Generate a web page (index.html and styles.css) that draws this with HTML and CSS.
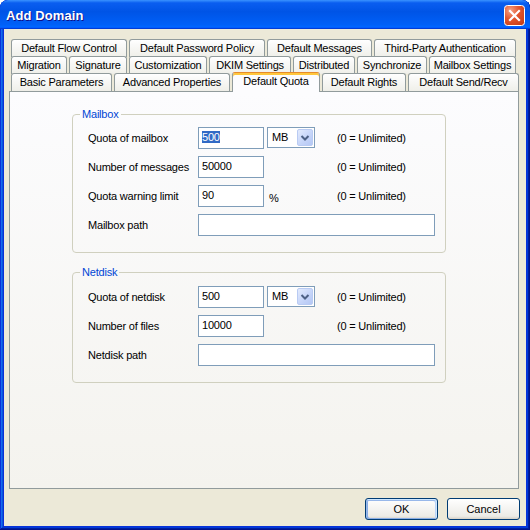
FILE: index.html
```html
<!DOCTYPE html>
<html lang="en">
<head>
<meta charset="utf-8">
<title>Add Domain</title>
<link rel="stylesheet" href="styles.css">
</head>
<body>
<div class="window">
  <div class="titlebar">
    <span class="title">Add Domain</span>
    <button class="close" aria-label="Close">
      <svg width="21" height="21" viewBox="0 0 21 21">
        <defs>
          <radialGradient id="cg" cx="0.3" cy="0.25" r="0.95">
            <stop offset="0" stop-color="#f6a285"/>
            <stop offset="0.45" stop-color="#e2562f"/>
            <stop offset="1" stop-color="#c43a14"/>
          </radialGradient>
        </defs>
        <rect x="0.5" y="0.5" width="20" height="20" rx="3" fill="url(#cg)" stroke="#fff"/>
        <path d="M6 6 L15 15 M15 6 L6 15" stroke="#fff" stroke-width="2.2" stroke-linecap="square" fill="none"/>
      </svg>
    </button>
  </div>
  <div class="client">
    <div class="tabs">
      <div class="tabrow r1">
        <div class="tab">Default Flow Control</div>
        <div class="tab">Default Password Policy</div>
        <div class="tab">Default Messages</div>
        <div class="tab">Third-Party Authentication</div>
      </div>
      <div class="tabrow r2">
        <div class="tab">Migration</div>
        <div class="tab">Signature</div>
        <div class="tab">Customization</div>
        <div class="tab">DKIM Settings</div>
        <div class="tab">Distributed</div>
        <div class="tab">Synchronize</div>
        <div class="tab">Mailbox Settings</div>
      </div>
      <div class="tabrow r3">
        <div class="tab">Basic Parameters</div>
        <div class="tab">Advanced Properties</div>
        <div class="tab sel">Default Quota</div>
        <div class="tab">Default Rights</div>
        <div class="tab">Default Send/Recv</div>
      </div>
    </div>
    <div class="panel">
      <fieldset class="group">
        <legend>Mailbox</legend>
        <div class="rows">
          <div class="row">
            <span class="label">Quota of mailbox</span>
            <div class="field"><span class="hl">500</span></div>
            <div class="combo"><span class="combo-text">MB</span><span class="combo-btn"><svg width="14" height="15" viewBox="0 0 14 15"><path d="M3.5 6 L7 9.5 L10.5 6" stroke="#4d6185" stroke-width="2" fill="none"/></svg></span></div>
            <span class="note">(0 = Unlimited)</span>
          </div>
          <div class="row">
            <span class="label">Number of messages</span>
            <div class="field">50000</div>
            <span></span>
            <span class="note">(0 = Unlimited)</span>
          </div>
          <div class="row">
            <span class="label">Quota warning limit</span>
            <div class="field">90</div>
            <span class="unit">%</span>
            <span class="note">(0 = Unlimited)</span>
          </div>
          <div class="row">
            <span class="label">Mailbox path</span>
            <div class="field wide"></div>
          </div>
        </div>
      </fieldset>
      <fieldset class="group g-net">
        <legend>Netdisk</legend>
        <div class="rows">
          <div class="row">
            <span class="label">Quota of netdisk</span>
            <div class="field">500</div>
            <div class="combo"><span class="combo-text">MB</span><span class="combo-btn"><svg width="14" height="15" viewBox="0 0 14 15"><path d="M3.5 6 L7 9.5 L10.5 6" stroke="#4d6185" stroke-width="2" fill="none"/></svg></span></div>
            <span class="note">(0 = Unlimited)</span>
          </div>
          <div class="row">
            <span class="label">Number of files</span>
            <div class="field">10000</div>
            <span></span>
            <span class="note">(0 = Unlimited)</span>
          </div>
          <div class="row">
            <span class="label">Netdisk path</span>
            <div class="field wide"></div>
          </div>
        </div>
      </fieldset>
    </div>
    <div class="buttons">
      <button class="btn def">OK</button>
      <button class="btn">Cancel</button>
    </div>
  </div>
</div>
</body>
</html>
```
FILE: styles.css
```css
* { box-sizing: border-box; }
html, body { margin: 0; padding: 0; }
body {
  width: 530px;
  height: 530px;
  background: #ffffff;
  font-family: "Liberation Sans", Arial, sans-serif;
  font-size: 11px;
  letter-spacing: -0.2px;
  color: #000;
}
.window {
  width: 530px;
  height: 530px;
  display: flex;
  flex-direction: column;
  background: #0831d9;
  border-radius: 8px 8px 0 0;
  overflow: hidden;
  box-shadow: inset -1px -1px #00138c, inset 1px 1px #0831d9, inset -2px -2px #001ea0, inset 2px 2px #166aee, inset -3px -3px #003bda, inset 3px 3px #0855dd;
}
.titlebar {
  flex: none;
  height: 29px;
  display: flex;
  align-items: center;
  justify-content: space-between;
  padding: 2px 5px 0 6px;
  border-radius: 8px 8px 0 0;
  background: linear-gradient(180deg, #3a93ff, #0a5ef0 10%, #0054e6 40%, #0060f8 85%, #0066ff 92%, #005bff 95%, #003dd7 96%, #003dd7);
}
.title {
  color: #fff;
  font-weight: bold;
  font-size: 13px;
  letter-spacing: 0.1px;
  text-shadow: 1px 1px #0f1089;
}
.close {
  width: 21px;
  height: 21px;
  padding: 0;
  border: 0;
  background: none;
  display: block;
}
.close svg { display: block; }
.client {
  flex: 1;
  margin: 0 4px 4px;
  background: #ece9d8;
  padding: 10px 0 0 5px;
}
.tabs { margin-left: 2px; }
.tabrow {
  display: grid;
  height: 17px;
  column-gap: 2px;
  align-items: start;
}
.r1 { grid-template-columns: 116px 136px 105px 142px; }
.r2 { grid-template-columns: 56px 58px 78px 82px 62px 70px 87px; }
.r3 { height: 18px; grid-template-columns: 101px 116px 88px 84px 111px; }
.tab {
  position: relative;
  height: 18px;
  border: 1px solid #919b9c;
  border-bottom: 0;
  border-radius: 3px 3px 0 0;
  background: linear-gradient(180deg, #fff, #fafaf9 26%, #f0f0ea 95%, #ecebe5);
  text-align: center;
  line-height: 16px;
  white-space: nowrap;
}
.tab.sel {
  height: 20px;
  margin-top: -1px;
  z-index: 2;
  background: #fcfcfe;
  border-top: 1px solid #e68b2c;
  box-shadow: inset 0 2px #ffc73c;
  line-height: 17px;
}
.panel {
  width: 510px;
  height: 398px;
  border: 1px solid #919b9c;
  background: linear-gradient(180deg, #fcfcfe, #f4f3ee);
  padding: 16px 0 0 62px;
}
.group {
  width: 374px;
  margin: 0;
  padding: 0;
  min-width: 0;
  border: 1px solid #d0d0bf;
  border-radius: 4px;
}
.group legend {
  color: #0046d5;
  padding: 0 2px;
  margin-left: 7px;
  line-height: 12px;
}
.g-net { margin-top: 13px; }
.rows {
  display: flex;
  flex-direction: column;
  gap: 7px;
  padding: 7px 0 16px 15px;
}
.g-net .rows { padding-top: 8px; }
.row {
  display: grid;
  grid-template-columns: 110px 69px 70px auto;
  align-items: center;
  height: 22px;
}
.field {
  width: 66px;
  height: 22px;
  border: 1px solid #7f9db9;
  background: #fff;
  padding: 0 3px;
  line-height: 19px;
  white-space: nowrap;
}
.field.wide {
  grid-column: 2 / -1;
  width: 237px;
}
.hl {
  background: #316ac5;
  color: #fff;
}
.combo {
  width: 48px;
  height: 21px;
  margin-top: -1px;
  border: 1px solid #7f9db9;
  background: #fff;
  display: flex;
  align-items: stretch;
  justify-content: space-between;
  padding: 1px;
}
.combo-text {
  padding-left: 3px;
  line-height: 17px;
}
.combo-btn {
  width: 16px;
  border: 1px solid #b9cbf3;
  border-radius: 2px;
  background: linear-gradient(135deg, #e3ebfd, #c6d5f9 55%, #b4c7f4);
  display: flex;
  align-items: center;
  justify-content: center;
}
.combo-btn svg { display: block; }
.unit { padding-left: 2px; padding-top: 3px; }
.note { white-space: nowrap; }
.buttons {
  display: flex;
  justify-content: flex-end;
  gap: 9px;
  margin-top: 9px;
  padding-right: 6px;
}
.btn {
  width: 73px;
  height: 22px;
  border: 1px solid #003c74;
  border-radius: 3px;
  background: linear-gradient(180deg, #fff, #ecebe6 86%, #d6d0c5);
  font-family: "Liberation Sans", Arial, sans-serif;
  font-size: 11px;
  color: #000;
  padding: 0;
}
.btn.def {
  box-shadow: inset -1px 1px #cee7ff, inset 1px 2px #98b8ea, inset -2px 2px #bcd4f6, inset 1px -1px #89ade4, inset 2px -1px #89ade4;
}
```
